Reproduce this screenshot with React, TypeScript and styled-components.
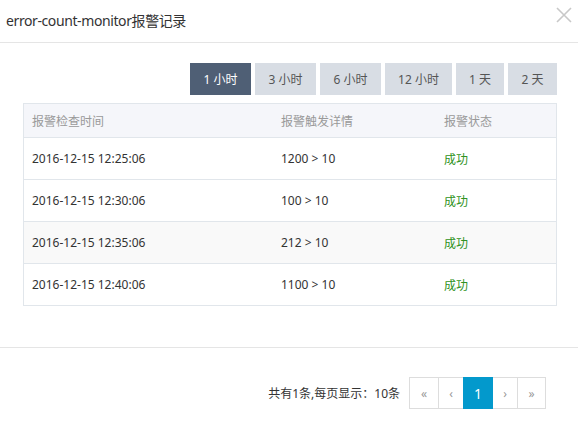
import React from "react";
import styled, { createGlobalStyle } from "styled-components";

const Global = createGlobalStyle`
  html, body { margin: 0; padding: 0; background: #fff; }
  body { font-family: "Noto Sans", "Noto Sans CJK SC", sans-serif; color: #333; }
  * { box-sizing: border-box; }
`;

const Dialog = styled.div`
  width: 578px;
  height: 422px;
  background: #fff;
  display: flex;
  flex-direction: column;
  overflow: hidden;
`;

const Header = styled.div`
  height: 43px;
  border-bottom: 1px solid #e5e5e5;
  display: flex;
  align-items: center;
  justify-content: space-between;
  padding: 0 6px 2px 6px;
`;

const Title = styled.div`
  font-size: 14px;
  color: #333;
  letter-spacing: -0.4px;
`;

const Close = styled.button`
  border: none;
  background: none;
  padding: 0;
  width: 16px;
  height: 16px;
  display: flex;
  cursor: pointer;
  align-self: flex-start;
  margin-top: 7px;
`;

const Body = styled.div`
  padding: 20px 21px 41px 23px;
  border-bottom: 1px solid #e5e5e5;
  display: flex;
  flex-direction: column;
  gap: 8px;
`;

const RangeBar = styled.div`
  display: flex;
  justify-content: flex-end;
  gap: 4px;
`;

const RangeButton = styled.button<{ $active?: boolean; $w: number }>`
  width: ${(p) => p.$w}px;
  height: 32px;
  border: none;
  padding: 0;
  font-family: inherit;
  font-size: 12px;
  background: ${(p) => (p.$active ? "#4f5f75" : "#d8dde4")};
  color: ${(p) => (p.$active ? "#fff" : "#555")};
  cursor: pointer;
`;

const Table = styled.div`
  border: 1px solid #e1e6eb;
`;

const Row = styled.div<{ $head?: boolean; $alt?: boolean }>`
  display: grid;
  grid-template-columns: 249px 163px 1fr;
  align-items: center;
  height: ${(p) => (p.$head ? "33px" : "42px")};
  border-top: ${(p) => (p.$head ? "none" : "1px solid #e1e6eb")};
  background: ${(p) => (p.$head ? "#f5f6fa" : p.$alt ? "#f9f9f9" : "#fff")};
  color: ${(p) => (p.$head ? "#999" : "#333")};
  font-size: 12px;
`;

const Cell = styled.div<{ $ok?: boolean }>`
  padding-left: 8px;
  color: ${(p) => (p.$ok ? "#2f9222" : "inherit")};
`;

const Footer = styled.div`
  padding: 29px 32px 0 0;
  display: flex;
  justify-content: flex-end;
  align-items: center;
`;

const Summary = styled.span`
  font-size: 12px;
  color: #333;
  margin-right: 9px;
`;

const Pager = styled.div`
  display: flex;
`;

const PageBtn = styled.button<{ $active?: boolean; $w: number }>`
  width: ${(p) => p.$w}px;
  height: 32px;
  margin-left: -1px;
  border: 1px solid ${(p) => (p.$active ? "#0399cc" : "#dddddd")};
  background: ${(p) => (p.$active ? "#0399cc" : "#fff")};
  color: ${(p) => (p.$active ? "#fff" : "#999")};
  font-family: inherit;
  font-size: ${(p) => (p.$active ? "14px" : "12px")};
  padding: 0;
  position: relative;
  z-index: ${(p) => (p.$active ? 1 : 0)};
  cursor: pointer;
  &:first-child { margin-left: 0; }
`;

const ranges = [
  { label: "1 小时", w: 61, active: true },
  { label: "3 小时", w: 61 },
  { label: "6 小时", w: 61 },
  { label: "12 小时", w: 67 },
  { label: "1 天", w: 48 },
  { label: "2 天", w: 49 },
];

const rows = [
  { time: "2016-12-15 12:25:06", detail: "1200 > 10" },
  { time: "2016-12-15 12:30:06", detail: "100 > 10" },
  { time: "2016-12-15 12:35:06", detail: "212 > 10" },
  { time: "2016-12-15 12:40:06", detail: "1100 > 10" },
];

const pages = [
  { label: "«", w: 30 },
  { label: "‹", w: 26 },
  { label: "1", w: 30, active: true },
  { label: "›", w: 26 },
  { label: "»", w: 29 },
];

export default function App() {
  return (
    <>
      <Global />
      <Dialog>
        <Header>
          <Title>error-count-monitor报警记录</Title>
          <Close aria-label="关闭">
            <svg width="16" height="16" viewBox="0 0 16 16">
              <path d="M1 1 L15 15 M15 1 L1 15" stroke="#c8c8c8" strokeWidth="1.6" fill="none" />
            </svg>
          </Close>
        </Header>
        <Body>
          <RangeBar>
            {ranges.map((r) => (
              <RangeButton key={r.label} $w={r.w} $active={r.active}>
                {r.label}
              </RangeButton>
            ))}
          </RangeBar>
          <Table>
            <Row $head>
              <Cell>报警检查时间</Cell>
              <Cell>报警触发详情</Cell>
              <Cell>报警状态</Cell>
            </Row>
            {rows.map((r, i) => (
              <Row key={r.time} $alt={i === 2}>
                <Cell>{r.time}</Cell>
                <Cell>{r.detail}</Cell>
                <Cell $ok>成功</Cell>
              </Row>
            ))}
          </Table>
        </Body>
        <Footer>
          <Summary>共有1条,每页显示：10条</Summary>
          <Pager>
            {pages.map((p, i) => (
              <PageBtn key={i} $w={p.w} $active={p.active}>
                {p.label}
              </PageBtn>
            ))}
          </Pager>
        </Footer>
      </Dialog>
    </>
  );
}
